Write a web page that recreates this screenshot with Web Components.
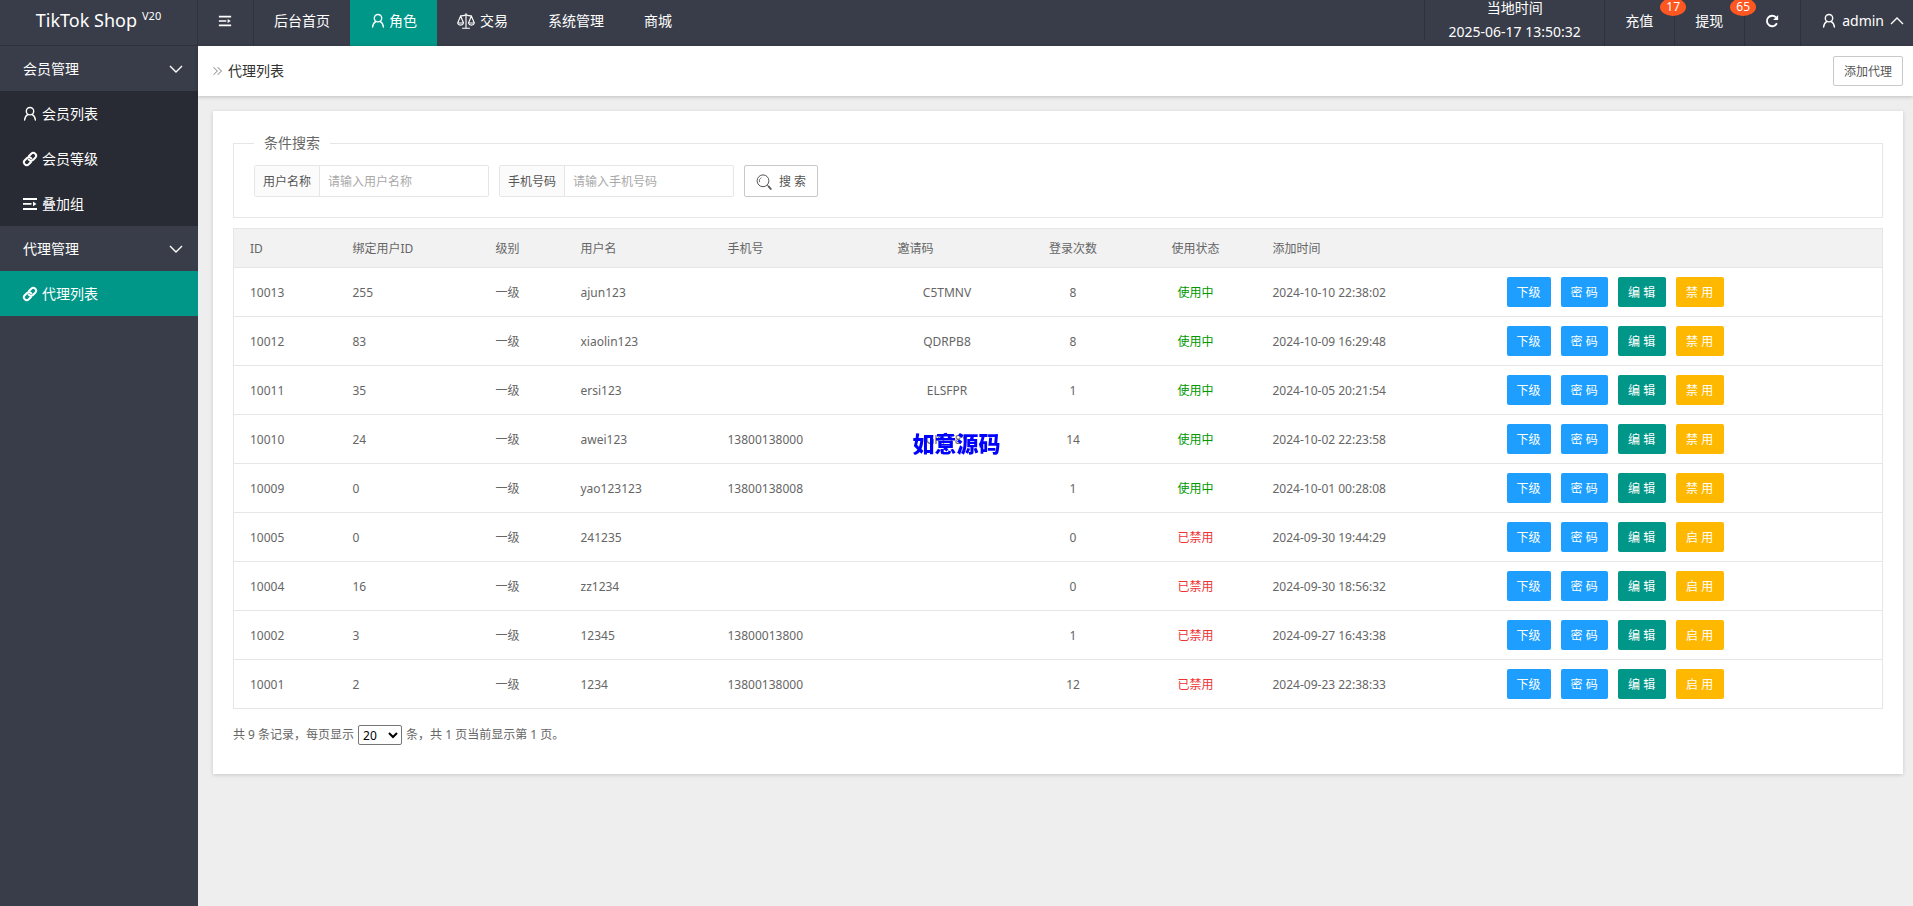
<!DOCTYPE html>
<html lang="zh-CN">
<head>
<meta charset="utf-8">
<title>代理列表</title>
<style>
html, body { height: 100%; }
body { margin: 0; background: #eee; color: #666; font: 14px/24px "Noto Sans", "Noto Sans CJK SC", sans-serif; }
</style>
</head>
<body>
<admin-app>
  <top-bar slot="top">
    <nav-item icon="shrink" class="line" label="收起菜单"></nav-item>
    <nav-item>后台首页</nav-item>
    <nav-item icon="user" active>角色</nav-item>
    <nav-item icon="scale">交易</nav-item>
    <nav-item>系统管理</nav-item>
    <nav-item>商城</nav-item>
    <local-clock slot="right" date="2025-06-17 13:50:32">当地时间</local-clock>
    <nav-item slot="right" class="line" badge="17">充值</nav-item>
    <nav-item slot="right" class="line" badge="65">提现</nav-item>
    <nav-item slot="right" class="line" icon="refresh" label="刷新"></nav-item>
    <nav-item slot="right" class="line" icon="user" trail="up">admin</nav-item>
  </top-bar>
  <side-nav slot="side">
    <side-group label="会员管理">
      <side-link icon="user">会员列表</side-link>
      <side-link icon="link">会员等级</side-link>
      <side-link icon="shrink">叠加组</side-link>
    </side-group>
    <side-group label="代理管理">
      <side-link icon="link" active>代理列表</side-link>
    </side-group>
  </side-nav>
  <title-bar slot="title">代理列表<ui-button slot="action" kind="plain">添加代理</ui-button></title-bar>
  <content-card>
    <search-panel legend="条件搜索">
      <search-field label="用户名称" hint="请输入用户名称"></search-field>
      <search-field label="手机号码" hint="请输入手机号码"></search-field>
      <ui-button kind="plain" icon="search" size="tall">搜 索</ui-button>
    </search-panel>
    <agent-table></agent-table>
    <page-info></page-info>
  </content-card>
  <water-mark slot="mark">如意源码</water-mark>
</admin-app>

<script>
const define = (name, render) => customElements.define(name, class extends HTMLElement {
  connectedCallback() {
    if (this.shadowRoot) return;
    this.attachShadow({ mode: 'open' }).innerHTML = render(this);
  }
});
const attr = (el, name) => el.getAttribute(name) || '';

const ICONS = {
  user: '<g fill="none" stroke="currentColor" stroke-width="1.4" stroke-linecap="round"><circle cx="8" cy="5.2" r="3.7"/><path d="M6 8.4C3.9 9.6 2.8 11.6 2.6 14M10 8.4c2.1 1.2 3.2 3.2 3.4 5.6"/></g>',
  shrink: '<path fill="currentColor" d="M1 2h14v2h-14zM1 7h8.5v1.8h-8.5zM1 12h14v2h-14zM11 5.6L14.5 7.9l-3.5 2.3z"/>',
  scale: '<g fill="none" stroke="currentColor" stroke-width="1" stroke-linejoin="round"><path d="M8 1.2v13M4.5 14.4h7M2.8 3.4c2 .2 3.5-.2 5.2-1 1.7.8 3.2 1.2 5.2 1M3.2 3.6L.6 9.8h5.2zM12.8 3.6l-2.6 6.2h5.2z"/><path d="M.6 10c.5 2.2 4.7 2.2 5.2 0M10.2 10c.5 2.2 4.7 2.2 5.2 0"/></g>',
  link: '<g fill="none" stroke="currentColor" stroke-width="2" stroke-linecap="round" transform="rotate(-45 8 8)"><path d="M6.6 10.8H3.4a2.8 2.8 0 0 1 0-5.6h3.2a2.8 2.8 0 0 1 2.7 3.4"/><path d="M9.4 5.2h3.2a2.8 2.8 0 0 1 0 5.6H9.4a2.8 2.8 0 0 1-2.7-3.4"/></g>',
  refresh: '<path d="M13.6 10.6A6 6 0 1 1 12.6 3.9" fill="none" stroke="currentColor" stroke-width="2.1"/><path d="M15 1v5.8H9.2z" fill="currentColor"/>',
  search: '<g fill="none" stroke="currentColor"><circle cx="7" cy="6.8" r="5.9"/><path d="M3.6 8.2a3.6 3.6 0 0 1 1.8-4.6" stroke-width=".8"/><path d="M11.2 11l1.4 1.4"/><path d="M12.6 12.4l2.2 2.6" stroke-width="1.8" stroke-linecap="round"/></g>',
  down: '<path d="M2 5l6 6 6-6" fill="none" stroke="currentColor" stroke-width="1.4"/>',
  up: '<path d="M2 11l6-6 6 6" fill="none" stroke="currentColor" stroke-width="1.4"/>',
  more: '<path d="M2 3l5 5-5 5M7.5 3l5 5-5 5" fill="none" stroke="currentColor" stroke-width="1.4"/>'
};
define('ui-icon', el => `
  <style>:host{display:inline-flex;width:16px;height:16px;flex:none}svg{width:100%;height:100%;display:block}</style>
  <svg viewBox="0 0 16 16" aria-hidden="true">${ICONS[attr(el, 'name')]}</svg>`);

define('admin-app', () => `
  <style>
    :host{display:grid;grid-template:46px auto 1fr / 198px 1fr;min-height:100%}
    .top{grid-column:1/-1}
    .side{grid-row:2/4;background:#393d49}
    .title{z-index:1}
    main{padding:15px 10px 15px 15px}
  </style>
  <header class="top"><slot name="top"></slot></header>
  <aside class="side"><slot name="side"></slot></aside>
  <div class="title"><slot name="title"></slot></div>
  <main><slot></slot></main>
  <slot name="mark"></slot>`);

define('top-bar', () => `
  <style>
    :host{display:flex;height:46px;background:#393d49;color:#fff}
    .logo{box-sizing:border-box;width:198px;border-right:1px solid #2f323d;border-bottom:1px solid #2f323d;display:flex;justify-content:center;gap:5px;color:#fff;text-decoration:none;font-size:18px;line-height:40px}
    sup{font-size:11px;line-height:32px;vertical-align:baseline}
    nav{display:flex}
    .right{margin-left:auto}
  </style>
  <a class="logo" href="#">TikTok Shop<sup>V20</sup></a>
  <nav><slot></slot></nav>
  <nav class="right"><slot name="right"></slot></nav>`);

define('nav-item', el => `
  <style>
    :host{display:block}
    :host(.line){border-style:solid;border-color:#2f323d;border-width:0 1px 0 0}
    :host(.line[slot]){border-width:0 0 0 1px}
    :host([active]){background:#009688}
    a{position:relative;display:flex;align-items:center;gap:3px;height:42px;padding:0 20px 4px;color:#fff;text-decoration:none;line-height:42px}
    :host(.line) a{padding-right:21px}
    :host([label]) ui-icon{width:14px;height:14px}
    :host([icon=scale]) a{gap:5px}
    :host([icon=scale]) ui-icon{width:18px;height:18px}
    :host([trail]) a{gap:5px;padding:0 8px 4px 20px}
    .badge{position:absolute;top:-2px;right:-12px;z-index:1;width:26px;height:18px;border-radius:50%;background:#ff5722;font-size:12px;line-height:18px;text-align:center}
  </style>
  <a href="#" ${attr(el, 'label') ? `aria-label="${attr(el, 'label')}"` : ''}>
    ${attr(el, 'icon') ? `<ui-icon name="${attr(el, 'icon')}"></ui-icon>` : ''}<slot></slot>
    ${attr(el, 'trail') ? `<ui-icon name="${attr(el, 'trail')}"></ui-icon>` : ''}
    ${attr(el, 'badge') ? `<span class="badge">${attr(el, 'badge')}</span>` : ''}
  </a>`);

define('local-clock', el => `
  <style>:host{box-sizing:border-box;min-width:180px;display:flex;flex-direction:column;justify-content:center;align-items:center;height:40px;padding:0 20px;border-left:1px solid #2f323d;line-height:24px}</style>
  <span><slot></slot></span><time>${attr(el, 'date')}</time>`);

define('side-nav', () => `<style>:host{display:block}</style><nav><slot></slot></nav>`);
define('side-group', el => `
  <style>
    :host{display:block;color:#fff}
    button{display:flex;align-items:center;justify-content:space-between;width:100%;height:45px;padding:0 14px 0 23px;border:0;background:none;color:inherit;font:inherit}
    div{background:#282b33}
  </style>
  <button type="button">${attr(el, 'label')}<ui-icon name="down"></ui-icon></button>
  <div><slot></slot></div>`);
define('side-link', el => `
  <style>
    :host{display:block}
    :host([active]){background:#009688}
    a{display:flex;align-items:center;gap:4px;height:45px;padding-left:22px;color:#fff;text-decoration:none}
  </style>
  <a href="#"><ui-icon name="${attr(el, 'icon')}"></ui-icon><slot></slot></a>`);

define('title-bar', () => `
  <style>
    :host{display:flex;align-items:center;height:50px;padding:0 10px 0 14px;background:#fff;box-shadow:0 1px 4px rgba(0,0,0,.2)}
    ui-icon{width:12px;height:12px;color:#999}
    h1{margin:0 auto 0 4px;font-size:14px;line-height:24px;font-weight:400;color:#333}
  </style>
  <ui-icon name="more"></ui-icon><h1><slot></slot></h1><slot name="action"></slot>`);

define('content-card', () => `
  <style>:host{display:block;padding:20px 20px 28px;background:#fff;box-shadow:0 1px 4px rgba(0,0,0,.16)}</style>
  <slot></slot>`);

define('ui-button', el => `
  <style>
    :host{display:inline-flex}
    button{box-sizing:border-box;display:flex;align-items:center;justify-content:center;gap:7px;height:30px;padding:2px 10px 0;border:0;border-radius:2px;color:#fff;font:12px/28px "Noto Sans","Noto Sans CJK SC",sans-serif;white-space:nowrap}
    :host([kind=blue]) button{background:#1e9fff}
    :host([kind=green]) button{background:#009688;min-width:48px}
    :host([kind=amber]) button{background:#ffb800;min-width:48px}
    :host([kind=plain]) button{border:1px solid #c9c9c9;background:#fff;color:#555}
    :host([size=tall]) button{height:32px;min-width:74px}
  </style>
  <button type="button">${attr(el, 'icon') ? `<ui-icon name="${attr(el, 'icon')}"></ui-icon>` : ''}<slot></slot></button>`);

define('search-panel', el => `
  <style>
    :host{display:block;margin-bottom:10px}
    fieldset{margin:0;padding:10px 20px 20px;border:1px solid #e6e6e6}
    legend{padding:0 10px;line-height:24px}
    form{display:flex;flex-wrap:wrap;gap:10px}
  </style>
  <fieldset><legend>${attr(el, 'legend')}</legend><form><slot></slot></form></fieldset>`);

define('search-field', el => `
  <style>
    :host{display:flex;box-sizing:border-box;width:235px;height:32px;border:1px solid #e6e6e6;border-radius:2px;font-size:12px;line-height:28px}
    label{box-sizing:border-box;width:65px;padding-top:2px;border-right:1px solid #e6e6e6;background:#fbfbfb;text-align:center;color:#555}
    input{flex:1;min-width:0;padding:2px 8px 0;border:0;outline:0;background:none;font:inherit;color:#333}
    input::placeholder{color:#a9a9a9}
  </style>
  <label for="f">${attr(el, 'label')}</label><input id="f" placeholder="${attr(el, 'hint')}">`);

const COLUMNS = [['ID', 103], ['绑定用户ID', 143], ['级别', 85], ['用户名', 147], ['手机号', 170], ['邀请码', 130], ['登录次数', 122], ['使用状态', 123], ['添加时间', 235], ['', 391]];
const AGENTS = [
  [10013, 255, 'ajun123', '', 'C5TMNV', 8, true, '2024-10-10 22:38:02'],
  [10012, 83, 'xiaolin123', '', 'QDRPB8', 8, true, '2024-10-09 16:29:48'],
  [10011, 35, 'ersi123', '', 'ELSFPR', 1, true, '2024-10-05 20:21:54'],
  [10010, 24, 'awei123', '13800138000', 'GKFT8Y', 14, true, '2024-10-02 22:23:58'],
  [10009, 0, 'yao123123', '13800138008', '', 1, true, '2024-10-01 00:28:08'],
  [10005, 0, '241235', '', '', 0, false, '2024-09-30 19:44:29'],
  [10004, 16, 'zz1234', '', '', 0, false, '2024-09-30 18:56:32'],
  [10002, 3, '12345', '13800013800', '', 1, false, '2024-09-27 16:43:38'],
  [10001, 2, '1234', '13800138000', '', 12, false, '2024-09-23 22:38:33']
];
define('agent-table', () => `
  <style>
    :host{display:block}
    table{width:100%;table-layout:fixed;border-collapse:collapse;border:1px solid #e6e6e6;font-size:12px;line-height:20px}
    th,td{box-sizing:border-box;padding:2px 15px 0 16px;text-align:left;font-weight:400;white-space:nowrap;border-bottom:1px solid #e6e6e6}
    th{height:39px;background:#f2f2f2}
    td{height:49px}
    td:last-child{padding:0 15px}
    .mid{text-align:center}
    .on{color:#090}
    .off{color:#e33}
    .acts{display:flex;gap:10px}
  </style>
  <table>
    <colgroup>${COLUMNS.map(c => `<col style="width:${c[1]}px">`).join('')}</colgroup>
    <thead><tr>${COLUMNS.map((c, i) => `<th scope="col"${i === 6 || i === 7 ? ' class="mid"' : ''}>${c[0]}</th>`).join('')}</tr></thead>
    <tbody>${AGENTS.map(([id, uid, name, phone, code, logins, on, added]) => `<tr>
      <td>${id}</td><td>${uid}</td><td>一级</td><td>${name}</td><td>${phone}</td>
      <td class="mid">${code}</td><td class="mid">${logins}</td>
      <td class="mid ${on ? 'on' : 'off'}">${on ? '使用中' : '已禁用'}</td><td>${added}</td>
      <td><div class="acts"><ui-button kind="blue">下级</ui-button><ui-button kind="blue">密 码</ui-button><ui-button kind="green">编 辑</ui-button><ui-button kind="amber">${on ? '禁 用' : '启 用'}</ui-button></div></td>
    </tr>`).join('')}</tbody>
  </table>`);

define('page-info', () => `
  <style>
    :host{display:flex;align-items:center;gap:4px;margin-top:15px;font-size:12px;line-height:22px}
    select{width:44px;height:20px;padding:0;border:1px solid #767676;border-radius:2px;background:#fff;color:#000;font:12px "Noto Sans",sans-serif}
  </style>
  <label for="size">共 9 条记录，每页显示</label>
  <select id="size"><option>20</option><option>40</option><option>60</option></select>
  <span>条，共 1 页当前显示第 1 页。</span>`);

define('water-mark', () => `
  <style>:host{position:fixed;left:50%;top:49%;transform:translate(-50%,-50%);z-index:2;padding-bottom:4px;color:#00f;font:900 22px/24px "Noto Sans CJK SC",sans-serif;pointer-events:none}</style>
  <slot></slot>`);
</script>
</body>
</html>
